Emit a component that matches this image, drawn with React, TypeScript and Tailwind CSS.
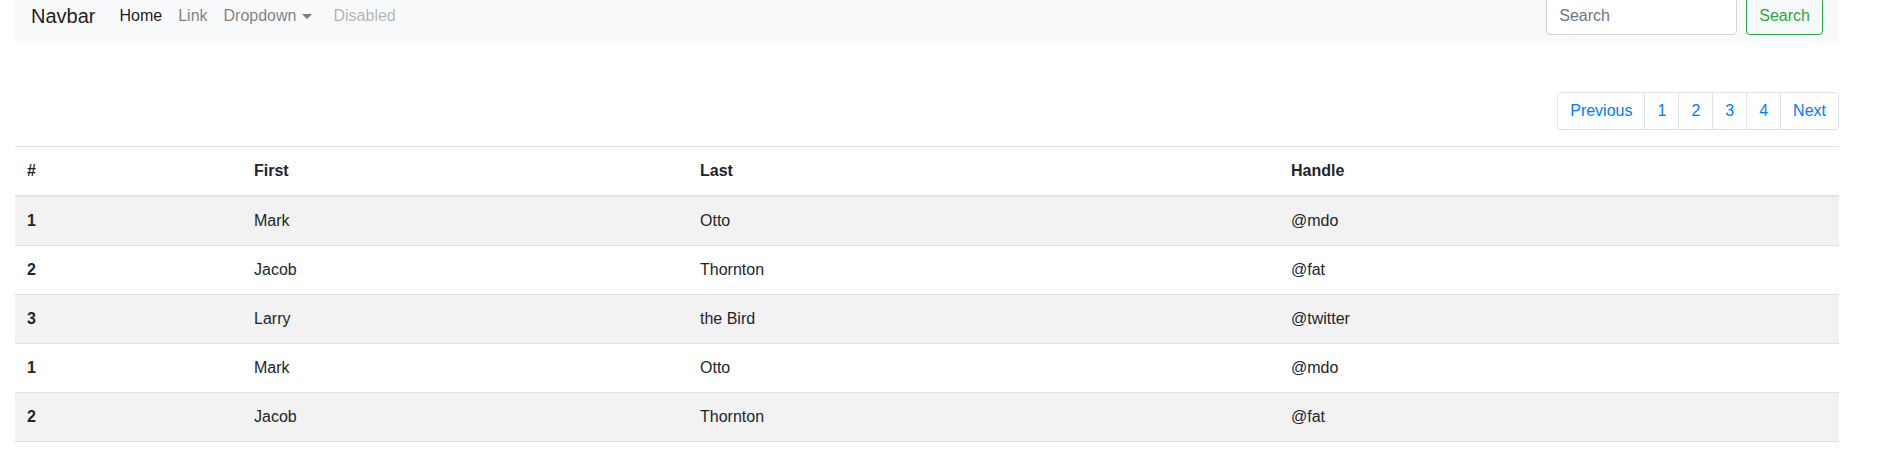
// App.tsx
const rows = [
  { id: 1, first: "Mark", last: "Otto", handle: "@mdo" },
  { id: 2, first: "Jacob", last: "Thornton", handle: "@fat" },
  { id: 3, first: "Larry", last: "the Bird", handle: "@twitter" },
  { id: 1, first: "Mark", last: "Otto", handle: "@mdo" },
  { id: 2, first: "Jacob", last: "Thornton", handle: "@fat" },
];

const pages = ["Previous", "1", "2", "3", "4", "Next"];

const App = () => {
  return (
    <div className="font-['Liberation_Sans',Arial,sans-serif] text-[16px] text-[#212529] bg-white min-h-screen">
      {/* Navbar */}
      <nav className="mx-[15px] mr-[48px] -mt-[11px] h-[54px] bg-[#f8f9fa] px-4 flex items-center justify-between">
        <div className="flex items-center">
          <span className="text-[20px] leading-[30px] text-black/90 mr-4">Navbar</span>
          <a className="px-2 leading-6 text-black/90">Home</a>
          <a className="px-2 leading-6 text-black/50">Link</a>
          <a className="pl-2 pr-[13px] leading-6 text-black/50 flex items-center">
            Dropdown
            <span className="ml-[6px] w-0 h-0 border-t-[5px] border-x-[5px] border-x-transparent border-t-black/50" />
          </a>
          <a className="px-2 leading-6 text-black/30">Disabled</a>
        </div>
        <form className="flex items-center">
          <input
            className="w-[191px] h-[38px] px-3 bg-white border border-[#ced4da] rounded text-[16px] placeholder:text-[#6c757d] outline-none"
            placeholder="Search"
          />
          <button
            type="button"
            className="ml-[9px] h-[38px] px-3 border border-[#28a745] rounded text-[#28a745] bg-transparent"
          >
            Search
          </button>
        </form>
      </nav>

      {/* Pagination */}
      <div className="mx-[15px] mr-[48px] mt-[49px] flex justify-end">
        <ul className="flex border border-[#dee2e6] rounded h-[38px]">
          {pages.map((p, i) => (
            <li
              key={p}
              className={
                "px-3 leading-[36px] text-[#007bff] " +
                (i > 0 ? "border-l border-[#dee2e6]" : "")
              }
            >
              {p}
            </li>
          ))}
        </ul>
      </div>

      {/* Table */}
      <table className="ml-[15px] mt-4 w-[1824px] table-fixed border-collapse">
        <thead>
          <tr>
            <th className="w-[227px] text-left font-bold p-3 leading-6 border-t border-b-2 border-[#dee2e6]">#</th>
            <th className="w-[446px] text-left font-bold p-3 leading-6 border-t border-b-2 border-[#dee2e6]">First</th>
            <th className="w-[591px] text-left font-bold p-3 leading-6 border-t border-b-2 border-[#dee2e6]">Last</th>
            <th className="text-left font-bold p-3 leading-6 border-t border-b-2 border-[#dee2e6]">Handle</th>
          </tr>
        </thead>
        <tbody>
          {rows.map((r, i) => (
            <tr key={i} className={i % 2 === 0 ? "bg-[#f2f2f2]" : "bg-white"}>
              <th className="text-left font-bold p-3 leading-6 border-y border-[#dee2e6]">{r.id}</th>
              <td className="p-3 leading-6 border-y border-[#dee2e6]">{r.first}</td>
              <td className="p-3 leading-6 border-y border-[#dee2e6]">{r.last}</td>
              <td className="p-3 leading-6 border-y border-[#dee2e6]">{r.handle}</td>
            </tr>
          ))}
        </tbody>
      </table>
    </div>
  );
};

export default App;
